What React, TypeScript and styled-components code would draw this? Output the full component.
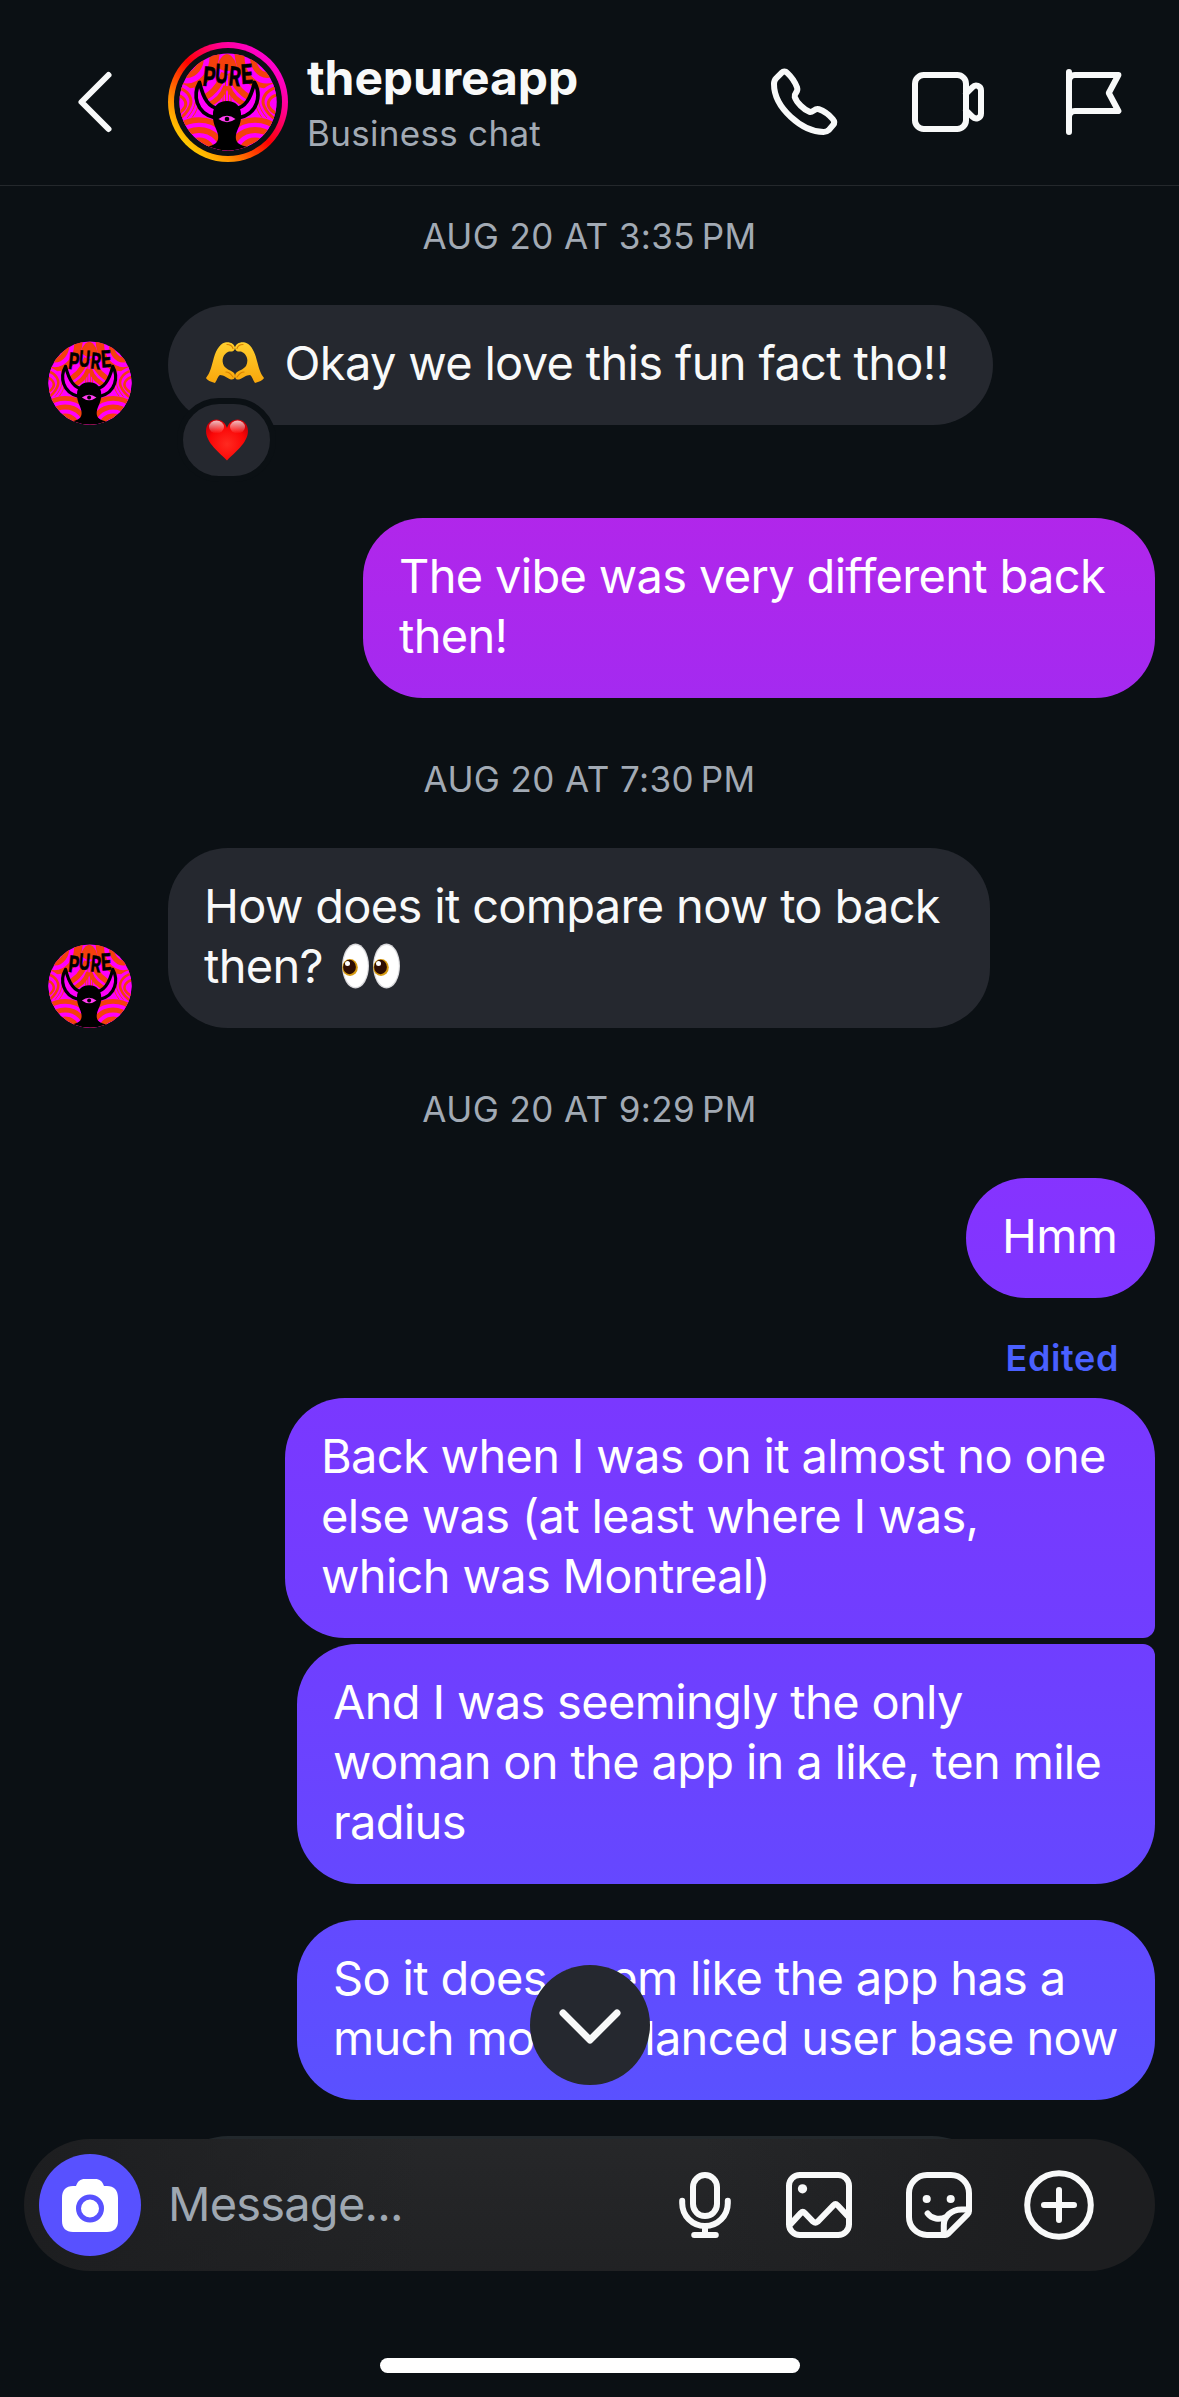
import React, { useId } from 'react';
import styled, { createGlobalStyle } from 'styled-components';

interface Message {
  id: number;
  kind: 'date' | 'edited' | 'in' | 'out';
  text: React.ReactNode;
  width?: number;
  gap?: number;
  radius?: string;
  liked?: boolean;
}

/* 프로필 그림 */
const ProfileArt: React.FC = () => {
  const id = useId().replace(/:/g, '');

  return (
    <svg viewBox="0 0 98 98" width="100%" height="100%">
      <defs>
        <clipPath id={`${id}c`}>
          <circle cx="49" cy="49" r="48.5" />
        </clipPath>
        <g id={`${id}h`} fill="none" stroke="#f4400c">
          <ellipse cx="8" cy="4" rx="14" ry="18" strokeWidth="6" />
          <ellipse cx="8" cy="4" rx="25" ry="29" strokeWidth="5" />
          <path d="M38-2C37 16 30 28 16 34" strokeWidth="5.500" />
          <path d="M45 20C41 32 34 42 20 47" strokeWidth="6" />
          <path d="M47 33C44 42 37 49 27 53" strokeWidth="5" />
          <path d="M46.500 24v28M44 36v14" strokeWidth="1" />
          <path d="M-2 30C14 32 18 44 14 52S4 68-2 70z" fill="#ff00fa" stroke="none" />
          <path d="M-2 34C10 38 14 46 11 53S2 65-2 67" strokeWidth="3" />
          <path d="M-2 42C6 44 8 50 6 54S0 60-2 61" strokeWidth="3" />
          <path d="M18 34C22 46 20 58 10 68M14 30C19 42 18 54 8 65" strokeWidth="1" />
          <circle cx="20" cy="102" r="38" fill="#ff00fa" stroke="none" />
          <circle cx="20" cy="102" r="35" strokeWidth="5.500" />
          <circle cx="20" cy="102" r="25" strokeWidth="6" />
          <circle cx="20" cy="102" r="14.500" strokeWidth="6" />
        </g>
        <path
          id={`${id}n`}
          d="M20.500 29.500C13.500 42 17 60 35 64.500L40 55.500C30 55 24.500 46 20.500 29.500z"
          fill="#ff00fa"
          stroke="#000"
          strokeWidth="3.700"
          strokeLinejoin="round"
        />
      </defs>
      <g clipPath={`url(#${id}c)`}>
        <rect width="98" height="98" fill="#ff00fa" />
        <use href={`#${id}h`} />
        <use href={`#${id}h`} transform="matrix(-1 0 0 1 96 0)" />
        <path d="M40 8q8-14 16 0l2 6q-10 8-20 0z" fill="#f4400c" />
        <use href={`#${id}n`} />
        <use href={`#${id}n`} transform="matrix(-1 0 0 1 96 0)" />
        <path
          d="M34 64C33 54 39 48 48 48s15 6 14 16c0 8-4 12-5 18-1 7 2 10 12 12v6H27v-6c10-2 13-5 12-12-1-6-5-10-5-18z"
          fill="#000"
        />
        <path d="M39.500 66q8.500-6.500 17 0q-8.500 6.500-17 0z" fill="#ff3cf0" />
        <circle cx="48" cy="66" r="2.300" fill="#000" />
        <g
          fill="#000"
          stroke="#000"
          strokeWidth="0.500"
          fontFamily="Inter, sans-serif"
          fontWeight="700"
          fontSize="24"
        >
          <text transform="translate(23 32.500) rotate(6) scale(.82 1.100)">P</text>
          <text transform="translate(35.500 29.500) rotate(4) scale(.74 1.080)">U</text>
          <text transform="translate(49 32) rotate(6) scale(.76 1.080)">R</text>
          <text transform="translate(62.500 31) rotate(-4) scale(.84 1.120)">E</text>
        </g>
      </g>
    </svg>
  );
};

/* 이모지 */
const HeartHands: React.FC = () => {
  const id = useId().replace(/:/g, '');

  return (
    <EmojiIcon viewBox="0 0 60 42" width={60} height={42} $margin="0 7px 0 1px">
      <defs>
        <linearGradient id={id} x1="0" y1="0" x2="0" y2="1">
          <stop offset="0" stopColor="#ffcf2e" />
          <stop offset="1" stopColor="#f9a70c" />
        </linearGradient>
        <g id={`${id}h`}>
          <path
            d="M1 37C5 32 6 27 8 20C10 11 14 3 20 1.500C25 .5 29.500 3 30 6.500C30 10 27 11 24 10.500C18 13 16 19 19 25C22 29 26 29 29 32C31 35 30 39 26 38.500C22 37 19 34 15 34C13 35 12 39 10 42C6 41 2 39 1 37z"
            fill={`url(#${id})`}
          />
          <path
            d="M22 3.500c3 0 5 1 6 4M21 31c3 0 5 2 7 5"
            fill="none"
            stroke="#d98200"
            strokeWidth="1.200"
            strokeLinecap="round"
          />
        </g>
      </defs>
      <use href={`#${id}h`} />
      <use href={`#${id}h`} transform="matrix(-1 0 0 1 60 0)" />
    </EmojiIcon>
  );
};

const Eyes: React.FC = () => (
  <EmojiIcon viewBox="0 0 60 46" width={60} height={46} $drop={6} $margin="0 0 0 5px">
    {[0, 31].map((x) => (
      <g key={x} transform={`translate(${x} 0)`}>
        <ellipse cx="14.500" cy="23" rx="13.500" ry="22.500" fill="#d9d9dc" />
        <ellipse cx="14.500" cy="23" rx="12.300" ry="21" fill="#fff" />
        <ellipse cx="9" cy="24.500" rx="7.800" ry="8.500" fill="#d69a12" />
        <ellipse cx="8.500" cy="24" rx="6.400" ry="7.200" fill="#2e0d02" />
        <circle cx="6.500" cy="20.500" r="2.500" fill="#fff" />
      </g>
    ))}
  </EmojiIcon>
);

const Heart: React.FC = () => (
  <svg viewBox="0 0 42 42" width={42} height={42}>
    <defs>
      <radialGradient id="heartBody" cx="0.5" cy="0.6" r="0.6">
        <stop offset="0" stopColor="#ff2a20" />
        <stop offset="0.7" stopColor="#fb0606" />
        <stop offset="1" stopColor="#d00008" />
      </radialGradient>
      <linearGradient id="heartShine" x1="0" y1="0" x2="0" y2="1">
        <stop offset="0" stopColor="#fff" stopOpacity="0.75" />
        <stop offset="1" stopColor="#fff" stopOpacity="0" />
      </linearGradient>
    </defs>
    <path
      d="M21 41.500C14 34 0 24 0 12C0 5 5 .5 10.500 .5C15.500 .5 19.500 4 21 9C22.500 4 26.500 .5 31.500 .5C37 .5 42 5 42 12C42 24 28 34 21 41.500z"
      fill="url(#heartBody)"
    />
    <ellipse cx="10.500" cy="8" rx="7.500" ry="6.500" fill="url(#heartShine)" />
    <ellipse cx="31.500" cy="8" rx="7.500" ry="6.500" fill="url(#heartShine)" />
  </svg>
);

const messages: Message[] = [
  { id: 1, kind: 'date', text: 'AUG 20 AT 3:35\u202fPM' },
  {
    id: 2,
    kind: 'in',
    width: 825,
    liked: true,
    text: (
      <>
        <HeartHands /> Okay we love this fun fact tho!!
      </>
    ),
  },
  {
    id: 3,
    kind: 'out',
    width: 792,
    gap: 93,
    text: 'The vibe was very different back\nthen!',
  },
  { id: 4, kind: 'date', text: 'AUG 20 AT 7:30\u202fPM' },
  {
    id: 5,
    kind: 'in',
    width: 822,
    text: (
      <>
        How does it compare now to back{'\n'}then? <Eyes />
      </>
    ),
  },
  { id: 6, kind: 'date', text: 'AUG 20 AT 9:29\u202fPM' },
  { id: 7, kind: 'out', width: 189, text: 'Hmm' },
  { id: 8, kind: 'edited', text: 'Edited' },
  {
    id: 9,
    kind: 'out',
    width: 870,
    radius: '60px 60px 12px 60px',
    text: 'Back when I was on it almost no one\nelse was (at least where I was,\nwhich was Montreal)',
  },
  {
    id: 10,
    kind: 'out',
    width: 858,
    gap: 6,
    radius: '60px 12px 60px 60px',
    text: 'And I was seemingly the only\nwoman on the app in a like, ten mile\nradius',
  },
  {
    id: 11,
    kind: 'out',
    width: 858,
    gap: 36,
    text: 'So it does seem like the app has a\nmuch more balanced user base now',
  },
];

const App: React.FC = () => {
  return (
    <Screen>
      <GlobalStyle />

      {/* 상단 헤더 */}
      <Header>
        <BackButton aria-label="Back">
          <LineIcon viewBox="0 0 36 66" width={36} height={66} strokeWidth={6}>
            <path d="M31.500 6L4.500 33l27 27" />
          </LineIcon>
        </BackButton>
        <StoryRing>
          <StoryInner>
            <ProfileArt />
          </StoryInner>
        </StoryRing>
        <Profile>
          <ProfileName>thepureapp</ProfileName>
          <ProfileType>Business chat</ProfileType>
        </Profile>
        <HeaderActions>
          <LineIcon>
            <path d="M4.600 2.200L2.700 4.100C2.200 4.600 2 5.200 2 6C2 14 11.500 22 18.500 22C19.300 22 19.800 21.800 20.200 21.400L21.700 19.700C22.200 19.100 22.200 18.400 21.600 17.700C20.300 16.200 18.600 15 16.900 14.400C15.500 14 15 15.600 13.900 15.300C12 14.600 9.500 12.200 8.900 10.300C8.600 9 10.200 8.800 9.700 7.200C9 5.200 7.800 3.600 6.400 2.300C5.800 1.700 5.100 1.700 4.600 2.200z" />
          </LineIcon>
          <LineIcon>
            <rect x="1" y="3" width="17" height="18" rx="2.900" />
            <path d="M18 9.200L20.100 7.100C21.200 6 23 6.600 23 8.200v7.600c0 1.600-1.800 2.200-2.900 1.100L18 14.800" />
          </LineIcon>
          <LineIcon>
            <path d="M4.330 2v20M4.330 5.200C4.330 3.900 5 3 6.300 3H20.800L17.600 9l3.200 6H6.300C5 15 4.330 15.900 4.330 17.200" />
          </LineIcon>
        </HeaderActions>
      </Header>

      {/* 대화 목록 */}
      <Thread>
        {messages.map((message) => {
          if (message.kind === 'date') {
            return <DateLabel key={message.id}>{message.text}</DateLabel>;
          }
          if (message.kind === 'edited') {
            return <EditedLabel key={message.id}>{message.text}</EditedLabel>;
          }
          if (message.kind === 'in') {
            return (
              <IncomingRow key={message.id}>
                <SmallAvatar>
                  <ProfileArt />
                </SmallAvatar>
                <IncomingBubble $width={message.width}>
                  {message.text}
                  {message.liked && (
                    <Reaction>
                      <Heart />
                    </Reaction>
                  )}
                </IncomingBubble>
              </IncomingRow>
            );
          }
          return (
            <OutgoingRow key={message.id} $gap={message.gap}>
              <OutgoingBubble $width={message.width} $radius={message.radius}>
                {message.text}
              </OutgoingBubble>
            </OutgoingRow>
          );
        })}
        <NextBubble />
      </Thread>

      {/* 맨 아래로 버튼 */}
      <ScrollButton aria-label="Scroll down">
        <LineIcon viewBox="0 0 66 40" width={66} height={40} strokeWidth={7}>
          <path d="M6 6l27 27L60 6" />
        </LineIcon>
      </ScrollButton>

      {/* 메시지 입력창 */}
      <Composer>
        <CameraButton aria-label="Camera">
          <svg viewBox="0 0 60 60" width={60} height={60}>
            <path
              d="M2 19C2 11 6 7 13 7h3C18 2 20 0 25 0h10c5 0 7 2 9 7h3c7 0 11 4 11 12v23c0 7-4 11-11 11H13C6 53 2 49 2 42z"
              fill="#fff"
            />
            <circle
              cx="30"
              cy="29.500"
              r="11.500"
              fill="none"
              stroke="#5851ff"
              strokeWidth="5"
            />
          </svg>
        </CameraButton>
        <Placeholder>Message...</Placeholder>
        <ComposerActions>
          <LineIcon viewBox="2 0 20 24" width={60}>
            <rect x="8" y="2" width="8" height="13.700" rx="4" />
            <path d="M4.400 10.600v.8a7.600 7.600 0 0 0 15.200 0v-.8M12 19v3M8.400 22h7.200" />
          </LineIcon>
          <LineIcon>
            <rect x="2" y="2" width="20" height="20" rx="3.600" />
            <circle cx="6.500" cy="6.600" r="1.550" fill="#f8f9f9" stroke="none" />
            <path d="M2.600 18.300L5.900 14.700Q6.600 14 7.300 14.700L10.100 17.600Q10.800 18.200 11.500 17.600L16.800 12.100Q17.500 11.400 18.200 12.100L21.600 15.700" />
          </LineIcon>
          <LineIcon>
            <path d="M14 22H8a6 6 0 0 1-6-6V8a6 6 0 0 1 6-6h8a6 6 0 0 1 6 6v6c0 .5-.2.800-.5 1.100L15 21.600c-.3.300-.6.400-1 .4z" />
            <path d="M22 13.500H19.500C16 13.500 13.600 16 13.600 18.800V22M8.200 14.800c1.300 1.900 4 2.300 6.200 1.200" />
            <circle cx="7.900" cy="10" r="1.350" fill="#f8f9f9" stroke="none" />
            <circle cx="15.900" cy="10" r="1.350" fill="#f8f9f9" stroke="none" />
          </LineIcon>
          <LineIcon>
            <circle cx="12" cy="12" r="10.600" />
            <path d="M12 7v10M7 12h10" />
          </LineIcon>
        </ComposerActions>
      </Composer>
      <HomeIndicator />
    </Screen>
  );
};

export default App;

const GlobalStyle = createGlobalStyle`
  * {
    box-sizing: border-box;
  }

  body {
    margin: 0;
    background-color: #0b1014;
  }
`;

const Screen = styled.div`
  position: relative;
  width: 1179px;
  height: 2397px;
  overflow: hidden;
  background-color: #0b1014;
  color: #f8f9f9;
  font-family: Inter, 'Liberation Sans', sans-serif;
`;

// 헤더
const Header = styled.header`
  display: flex;
  align-items: center;
  height: 186px;
  padding: 18px 51px 0 77px;
  border-bottom: 1px solid #24282c;
`;
const BackButton = styled.button`
  display: flex;
  width: 91px;
  padding: 0;
  border: none;
  background: none;
`;
const StoryRing = styled.div`
  flex-shrink: 0;
  width: 120px;
  height: 120px;
  padding: 6px;
  border-radius: 50%;
  background: linear-gradient(
    45deg,
    #ffc800 15%,
    #ff9000 27%,
    #ff0000 50%,
    #ff0090 70%,
    #ff00d4 86%
  );
`;
const StoryInner = styled.div`
  display: flex;
  width: 108px;
  height: 108px;
  padding: 5px;
  border-radius: 50%;
  background-color: #0b1014;
`;
const Profile = styled.div`
  flex: 1;
  display: flex;
  flex-direction: column;
  padding: 5px 0 0 19px;
`;
const ProfileName = styled.h1`
  margin: 0;
  font-size: 48px;
  font-weight: 700;
  line-height: 58px;
  letter-spacing: -0.1px;
`;
const ProfileType = styled.span`
  font-size: 35px;
  line-height: 52px;
  letter-spacing: 0.3px;
  color: #a2aab4;
`;
const HeaderActions = styled.div`
  display: flex;
  gap: 72px;
`;
const LineIcon = styled.svg.attrs(
  ({ viewBox, width, height, strokeWidth }) => ({
    viewBox: viewBox ?? '0 0 24 24',
    width: width ?? 72,
    height: height ?? 72,
    strokeWidth: strokeWidth ?? 2,
  }),
)`
  display: block;
  flex-shrink: 0;
  fill: none;
  stroke: #f8f9f9;
  stroke-linecap: round;
  stroke-linejoin: round;
`;
const EmojiIcon = styled.svg<{ $drop?: number; $margin?: string }>`
  margin: ${({ $margin }) => $margin ?? 0};
  vertical-align: -${({ $drop }) => $drop ?? 3}px;
`;

// 대화 영역
const Thread = styled.main`
  display: flex;
  flex-direction: column;
`;
const DateLabel = styled.div`
  padding: 59px 0 47px;
  font-size: 35px;
  line-height: 44px;
  letter-spacing: 0.4px;
  text-align: center;
  color: #a2aab4;

  &:first-child {
    padding-top: 28px;
  }
`;
const EditedLabel = styled.div`
  height: 100px;
  padding: 38px 36px 0 0;
  margin-right: 24px;
  font-size: 36px;
  font-weight: 600;
  line-height: 44px;
  letter-spacing: 0.6px;
  text-align: right;
  color: #4a60ff;
`;
const IncomingRow = styled.div`
  display: flex;
  align-items: flex-end;
  gap: 36px;
  padding-left: 48px;
`;
const OutgoingRow = styled.div<{ $gap?: number }>`
  display: flex;
  justify-content: flex-end;
  margin-top: ${({ $gap }) => $gap ?? 0}px;
  padding-right: 24px;
`;
const SmallAvatar = styled.div`
  display: flex;
  width: 84px;
  height: 84px;
`;
const Bubble = styled.div<{ $width?: number; $radius?: string }>`
  width: ${({ $width }) => $width}px;
  padding: 28px 36px 32px;
  border-radius: ${({ $radius }) => $radius ?? '60px'};
  font-size: 47px;
  line-height: 60px;
  letter-spacing: -0.68px;
  white-space: pre;
`;
const IncomingBubble = styled(Bubble)`
  position: relative;
  background-color: #25282f;
`;
// 그라데이션은 화면 전체 기준으로 이어진다
const OutgoingBubble = styled(Bubble)`
  color: #fff;
  background-image: linear-gradient(
    180deg,
    #b226ea 500px,
    #a42af0 700px,
    #8633ff 1170px,
    #7a38ff 1400px,
    #703eff 1640px,
    #6548ff 1885px,
    #5a51ff 2100px
  );
  background-attachment: fixed;
`;
const Reaction = styled.div`
  position: absolute;
  left: 9px;
  top: 93px;
  display: flex;
  align-items: center;
  justify-content: center;
  width: 99px;
  height: 84px;
  border: 6px solid #0b1014;
  border-radius: 42px;
  background-color: #25282f;
`;
const NextBubble = styled.div`
  width: 824px;
  height: 120px;
  margin: 36px 0 0 168px;
  border-radius: 60px;
  background-color: #22282c;
`;

// 화면 위에 떠 있는 요소
const ScrollButton = styled.button`
  position: absolute;
  left: 530px;
  top: 1965px;
  display: flex;
  align-items: center;
  justify-content: center;
  width: 120px;
  height: 120px;
  padding: 3px 0 0;
  border: none;
  border-radius: 50%;
  background-color: #25282f;
`;
const Composer = styled.div`
  position: absolute;
  left: 24px;
  right: 24px;
  bottom: 126px;
  display: flex;
  align-items: center;
  height: 132px;
  padding: 0 60px 0 15px;
  border-radius: 66px;
  background: linear-gradient(
      90deg,
      #1d1e20 0%,
      rgba(29, 30, 32, 0) 35%,
      rgba(29, 30, 32, 0) 60%,
      #1d1e20 90%
    ),
    linear-gradient(180deg, #262729, #212224);
`;
const CameraButton = styled.button`
  display: flex;
  align-items: center;
  justify-content: center;
  width: 102px;
  height: 102px;
  padding: 7px 0 0;
  border: none;
  border-radius: 50%;
  background-color: #5851ff;
`;
const Placeholder = styled.span`
  flex: 1;
  padding: 0 0 2px 27px;
  font-size: 47px;
  line-height: 60px;
  letter-spacing: -0.8px;
  color: #9ea7b1;
`;
const ComposerActions = styled.div`
  display: flex;
  align-items: center;
  gap: 48px;
`;
const HomeIndicator = styled.div`
  position: absolute;
  left: 380px;
  bottom: 24px;
  width: 420px;
  height: 15px;
  border-radius: 8px;
  background-color: #fff;
`;
